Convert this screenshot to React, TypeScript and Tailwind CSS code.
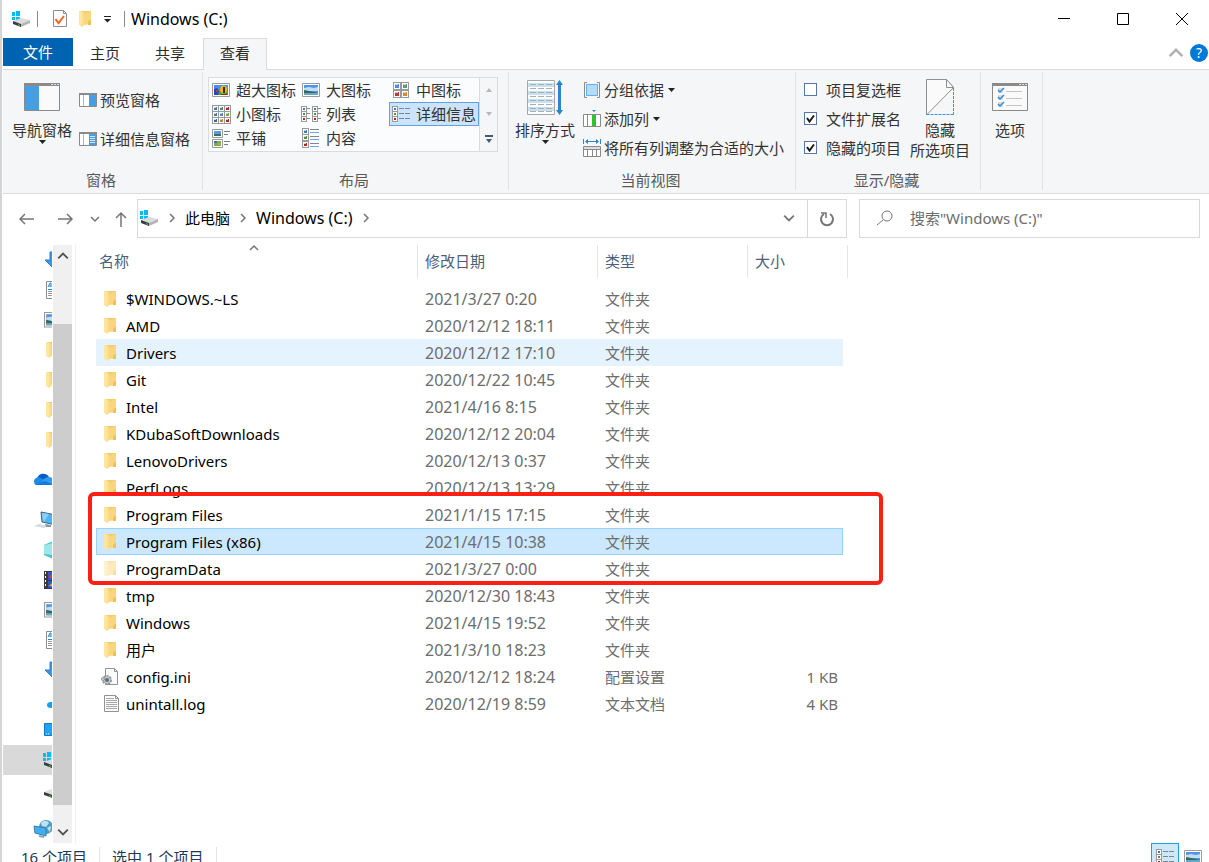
import { useState } from "react";
import type { ReactNode } from "react";
import clsx from "clsx";

type IconKind = "folder" | "hidden" | "config" | "text";

interface FileEntry {
  name: string;
  date: string;
  type: string;
  size?: string;
  icon: IconKind;
}

const FILES: FileEntry[] = [
  { name: "$WINDOWS.~LS", date: "2021/3/27 0:20", type: "文件夹", icon: "folder" },
  { name: "AMD", date: "2020/12/12 18:11", type: "文件夹", icon: "folder" },
  { name: "Drivers", date: "2020/12/12 17:10", type: "文件夹", icon: "folder" },
  { name: "Git", date: "2020/12/22 10:45", type: "文件夹", icon: "folder" },
  { name: "Intel", date: "2021/4/16 8:15", type: "文件夹", icon: "folder" },
  { name: "KDubaSoftDownloads", date: "2020/12/12 20:04", type: "文件夹", icon: "folder" },
  { name: "LenovoDrivers", date: "2020/12/13 0:37", type: "文件夹", icon: "folder" },
  { name: "PerfLogs", date: "2020/12/13 13:29", type: "文件夹", icon: "folder" },
  { name: "Program Files", date: "2021/1/15 17:15", type: "文件夹", icon: "folder" },
  { name: "Program Files (x86)", date: "2021/4/15 10:38", type: "文件夹", icon: "folder" },
  { name: "ProgramData", date: "2021/3/27 0:00", type: "文件夹", icon: "hidden" },
  { name: "tmp", date: "2020/12/30 18:43", type: "文件夹", icon: "folder" },
  { name: "Windows", date: "2021/4/15 19:52", type: "文件夹", icon: "folder" },
  { name: "用户", date: "2021/3/10 18:23", type: "文件夹", icon: "folder" },
  { name: "config.ini", date: "2020/12/12 18:24", type: "配置设置", size: "1 KB", icon: "config" },
  { name: "unintall.log", date: "2020/12/19 8:59", type: "文本文档", size: "4 KB", icon: "text" },
];

/* ---------- Icons ---------- */

function Svg({ w, h, className, children }: { w: number; h: number; className?: string; children: ReactNode }) {
  return (
    <svg width={w} height={h} viewBox={`0 0 ${w} ${h}`} fill="none" aria-hidden="true" className={clsx("shrink-0", className)}>
      {children}
    </svg>
  );
}

function FolderIcon({ faded = false }: { faded?: boolean }) {
  return (
    <Svg w={20} h={20} className={faded ? "opacity-50" : ""}>
      <path d="M6 2h10v13h-7z" fill="#f2cc6a" />
      <path d="M9 5l7-3v13l-7 1z" fill="#f7d67e" />
      <path d="M15 11h1v5h-3v-3z" fill="#efc052" />
      <path d="M4 2h2l3 2v12l-2 2-3-2z" fill="#ffe6a0" />
      <path d="M7 4l2-1v13l-2 2z" fill="#fbdd8b" />
    </Svg>
  );
}

function DriveIcon() {
  return (
    <Svg w={20} h={18}>
      <path d="M1 2h3v4H1zM5 1h4v5H5zM1 7h3v3H1zM5 7h4v3H5z" fill="#00bcf2" />
      <path d="M2 11l8-3 9 2-9 4z" fill="#dcdcdc" />
      <path d="M2 11l8 3v3l-8-3z" fill="#3c3c3c" />
      <path d="M10 14l9-4v3l-9 4z" fill="#b4b4b4" />
      <path d="M7 14l2 1v1l-2-1z" fill="#3fd34b" />
    </Svg>
  );
}

function PlainDriveIcon() {
  return (
    <Svg w={20} h={18}>
      <path d="M0 9l8-3 10 2-8 4z" fill="#dedede" />
      <path d="M0 9l9 3v3l-9-3z" fill="#3c3c3c" />
      <path d="M9 12l9-4v3l-9 4z" fill="#b4b4b4" />
      <path d="M5 12l2 1v1l-2-1z" fill="#3fd34b" />
    </Svg>
  );
}

function PageCheckIcon() {
  return (
    <Svg w={16} h={18}>
      <path d="M1.5.5h10l3 3v13h-13z" fill="#fdfdfd" stroke="#8c8c8c" />
      <path d="M11.5.5v3h3" stroke="#8c8c8c" />
      <path d="M3.500 9l3 4 5.500-7" stroke="#f26522" strokeWidth="2" />
    </Svg>
  );
}

function DownloadIcon() {
  return (
    <Svg w={20} h={20}>
      <path d="M6 2h6v8h5l-8 8-8-8h5z" fill="#3a96e8" stroke="#2a7fce" />
    </Svg>
  );
}

function DocIcon() {
  return (
    <Svg w={20} h={20}>
      <path d="M2.500 1.500h13v17h-13z" fill="#fff" stroke="#8c8c8c" />
      <path d="M4 7l2-4h1v4M5 6h2" stroke="#1a88d8" />
      <path d="M9 4.500h5M9 6.500h5M4 9.500h10" stroke="#1a88d8" />
      <path d="M4 11.500h10M4 13.500h10M4 15.500h10" stroke="#9c9c9c" />
    </Svg>
  );
}

function PictureIcon({ w = 20 }: { w?: number }) {
  return (
    <svg width={w} height={(w * 7) / 9} viewBox="0 0 18 14" fill="none" aria-hidden="true" className="shrink-0">
      <path d="M.5.5h17v13H.5z" fill="#fff" stroke="#9a9a9a" />
      <path d="M2 2h14v10H2z" fill="#4f95e8" />
      <path d="M2 5l5-1 5 1 4-1v4H2z" fill="#c2dcf5" />
      <path d="M2 7l5 1 9 2v1H2z" fill="#2f6b58" />
      <path d="M2 10h14v2H2z" fill="#6ba6c9" />
    </svg>
  );
}

function OneDriveIcon() {
  return (
    <Svg w={24} h={16}>
      <path d="M5 7C6 1 14 0 17 5l-6 5z" fill="#0a5fc4" />
      <path d="M4 13a4 4 0 0 1 0-7c3-1 5 0 7 1l8 6z" fill="#1b8be8" />
      <path d="M11 8c3-4 10-4 12 1v4H9z" fill="#2f9df4" />
      <path d="M3 13l10-4 9 4z" fill="#1478dc" />
    </Svg>
  );
}

function PcIcon() {
  return (
    <Svg w={24} h={20}>
      <path d="M9 2l15 3v10l-14-3z" fill="#4cb4f4" stroke="#4c6172" />
      <path d="M10 3l7 1-5 8-1-1z" fill="#8bd0fa" />
      <path d="M2 16l5-2 9 2-4 2z" fill="#d2dbe2" />
      <path d="M13 14l6 1v2h-5z" fill="#8a98a4" />
    </Svg>
  );
}

function CubeIcon() {
  return (
    <Svg w={20} h={20}>
      <path d="M0 5l9-4 9 4v10l-9 4-9-4z" fill="#45c4cc" />
      <path d="M0 5l9-2v12l-9-1z" fill="#9ee6e8" />
    </Svg>
  );
}

function VideoIcon() {
  return (
    <Svg w={20} h={20}>
      <path d="M0 1h20v18H0z" fill="#3a3a3a" />
      <path d="M1.500 2v16" stroke="#fff" strokeWidth="1" strokeDasharray="2 2" />
      <path d="M4 2h14v8H4z" fill="#3056c8" />
      <path d="M5 8l2-4 3 4z" fill="#e8352b" />
      <path d="M4 11h14v7H4z" fill="#3056c8" />
      <path d="M5 16l3-3 2 4z" fill="#f2a53a" />
    </Svg>
  );
}

function MusicIcon() {
  return (
    <Svg w={20} h={20}>
      <ellipse cx="7" cy="15" rx="4" ry="3" fill="#12a0f5" />
      <path d="M11 2v13" stroke="#12a0f5" strokeWidth="2" />
    </Svg>
  );
}

function DesktopIcon() {
  return (
    <Svg w={20} h={16}>
      <path d="M.5 1.500h18v12H.5z" fill="#1ea5fb" stroke="#0f78c4" />
      <path d="M2 12h1M4 12h1" stroke="#fff" />
    </Svg>
  );
}

function NetworkIcon() {
  return (
    <Svg w={22} h={20}>
      <circle cx="13" cy="8" r="7" fill="#4d9dc4" />
      <path d="M8 4c3-3 6-3 8 0l-3 4-4-1zM14 9l4-2-1 6z" fill="#bfe3f2" />
      <path d="M1 7l12 2v8L2 14z" fill="#42aef2" stroke="#3a7fae" />
      <path d="M6 17l5 1" stroke="#8fa5b3" strokeWidth="2" />
    </Svg>
  );
}

function ConfigFileIcon() {
  return (
    <Svg w={20} h={20}>
      <path d="M5.500 1.500h9l3 3v13h-12z" fill="#fafafa" stroke="#929292" />
      <path d="M14.500 1.500v3h3" stroke="#929292" />
      <circle cx="7" cy="13" r="4" fill="#c8ced3" stroke="#8f979d" strokeWidth="2" strokeDasharray="2 1" />
      <circle cx="7" cy="13" r="2" fill="#5f6b74" />
      <circle cx="3" cy="12" r="1.500" fill="#d0d5d9" stroke="#8f979d" />
    </Svg>
  );
}

function TextFileIcon() {
  return (
    <Svg w={20} h={20}>
      <path d="M4.500 1.500h11l3 3v13h-14z" fill="#fafafa" stroke="#929292" />
      <path d="M15.500 1.500v3h3" stroke="#929292" />
      <path d="M6 4.500h8M6 6.500h11M6 8.500h11M6 10.500h11M6 12.500h11M6 14.500h11" stroke="#a8a8a8" />
    </Svg>
  );
}

function FileIcon({ kind }: { kind: IconKind }) {
  if (kind === "config") return <ConfigFileIcon />;
  if (kind === "text") return <TextFileIcon />;
  return <FolderIcon faded={kind === "hidden"} />;
}

function Chevron({ dir, size = 10, className = "text-[#757575]" }: { dir: "up" | "down" | "right"; size?: number; className?: string }) {
  const d = { up: "M1 7l4-4 4 4", down: "M1 3l4 4 4-4", right: "M3 1l4 4-4 4" }[dir];
  return (
    <svg width={size} height={size} viewBox="0 0 10 10" fill="none" aria-hidden="true" className={clsx("shrink-0", className)}>
      <path d={d} stroke="currentColor" strokeWidth="1.500" />
    </svg>
  );
}

function Caret({ className }: { className?: string }) {
  return (
    <Svg w={7} h={4} className={className}>
      <path d="M0 0h7L3.500 4z" fill="#222" />
    </Svg>
  );
}

function NavPaneIcon() {
  return (
    <Svg w={36} h={28}>
      <path d="M.5.5h35v27H.5z" fill="#fafafa" stroke="#8a8a8a" />
      <path d="M0 0h36v3H0z" fill="#8a8a8a" />
      <path d="M27 1h2v1h-2zM30 1h2v1h-2zM33 1h2v1h-2z" fill="#e4e4e4" />
      <path d="M1 3h14v24H1z" fill="#479fe2" />
    </Svg>
  );
}

function SidePaneIcon({ lines = false }: { lines?: boolean }) {
  return (
    <Svg w={18} h={14}>
      <path d="M.5.5h17v13H.5z" fill="#fff" stroke="#8a8a8a" />
      <path d="M0 0h18v2H0z" fill="#8a8a8a" />
      <path d="M4.500 2v11" stroke="#b4b4b4" />
      <path d="M10 2h7v11h-7z" fill="#479fe2" />
      {lines && <path d="M11 4.500h5M11 6.500h5M11 8.500h5M11 10.500h5" stroke="#cfe8fb" />}
    </Svg>
  );
}

// small framed thumbnail used by most of the layout icons
function Thumb({ x, y, color, s = 6 }: { x: number; y: number; color: string; s?: number }) {
  return (
    <g>
      <rect x={x + 0.5} y={y + 0.5} width={s - 1} height={s - 1} fill="#fff" stroke="#9a9a9a" />
      <rect x={x + 2} y={y + 2} width={s - 4} height={s - 4} fill={color} />
      {s > 6 && <rect x={x + 2} y={y + 2} width={s - 5} height="1" fill="#b9d5ee" />}
    </g>
  );
}

function XLargeIcon() {
  return (
    <Svg w={18} h={14}>
      <path d="M.5.5h17v13H.5z" fill="#fff" stroke="#9a9a9a" />
      <path d="M2 2h14v6H2z" fill="#4a8df0" />
      <path d="M2 8h14v4H2z" fill="#4a9b43" />
      <path d="M2 6l3-1 2 3-1 4H2z" fill="#2948b8" />
      <path d="M4 7h2v2H4z" fill="#e33126" />
      <ellipse cx="11.500" cy="6.500" rx="3.500" ry="4" fill="#f3b51d" />
      <path d="M11 4h2v6h-2z" fill="#3a2a14" />
      <path d="M9 11h6v1H9z" fill="#8c2a1c" />
    </Svg>
  );
}

function MediumIcon() {
  return (
    <Svg w={18} h={16}>
      <Thumb x={1} y={0} s={8} color="#4f8fd6" />
      <Thumb x={9} y={0} s={8} color="#5a9f74" />
      <Thumb x={1} y={8} s={8} color="#c0392b" />
      <Thumb x={9} y={8} s={8} color="#d98b2b" />
    </Svg>
  );
}

function SmallIcon() {
  const colors = ["#3c7ac4", "#3f8f86", "#b3261e", "#3f7f9c", "#4c84d0", "#7aa637", "#2f6f9c", "#d07a24", "#b3261e"];
  return (
    <Svg w={19} h={19}>
      {colors.map((c, i) => (
        <Thumb key={i} x={(i % 3) * 6} y={Math.floor(i / 3) * 6} s={7} color={c} />
      ))}
    </Svg>
  );
}

function ListIcon() {
  return (
    <Svg w={20} h={17}>
      {[0, 11].map((x) => (
        <g key={x}>
          <Thumb x={x} y={0} color="#3c7ac4" />
          <Thumb x={x} y={5} color="#5b8f37" />
          <Thumb x={x} y={10} color="#b3261e" />
          <path d={`M${x + 6} 2.500h3M${x + 6} 7.500h3M${x + 6} 12.500h3`} stroke="#8a8a8a" />
        </g>
      ))}
    </Svg>
  );
}

function DetailsIcon() {
  return (
    <Svg w={18} h={16}>
      <Thumb x={0} y={0} color="#3c7ac4" />
      <Thumb x={0} y={5} color="#5b8f37" />
      <Thumb x={0} y={10} color="#b3261e" />
      <path d="M7 2.500h5M13 2.500h5M7 7.500h5M13 7.500h5M7 12.500h5M13 12.500h5" stroke="#7d8792" />
    </Svg>
  );
}

function TilesIcon() {
  return (
    <Svg w={18} h={19}>
      <path d="M.5.5h10v8H.5zM.5 10.500h10v8H.5z" fill="#fff" stroke="#9a9a9a" />
      <path d="M2 2h7v3H2z" fill="#5b9be0" />
      <path d="M2 5h7v2H2z" fill="#36706c" />
      <path d="M2 12h7v5H2z" fill="#79b04a" />
      <path d="M2 12h3v2H2z" fill="#3f6fc0" />
      <path d="M6 14h2v2H6z" fill="#e09a2c" />
      <path d="M12 2.500h6M12 5.500h4M12 12.500h6M12 15.500h4" stroke="#7d7d7d" />
    </Svg>
  );
}

function ContentIcon() {
  return (
    <Svg w={18} h={20}>
      <Thumb x={0} y={0} s={7} color="#3c7ac4" />
      <Thumb x={0} y={6} s={7} color="#5b8f37" />
      <Thumb x={0} y={13} s={7} color="#b3261e" />
      <path d="M8 1.500h9M8 8.500h9M8 15.500h9" stroke="#7d8792" />
      <path d="M8 4.500h9M8 11.500h9M8 18.500h9" stroke="#6ea3f2" />
    </Svg>
  );
}

function SortIcon() {
  return (
    <Svg w={36} h={35}>
      <path d="M.5.5h27v34H.5z" fill="#fff" stroke="#a6a6a6" />
      <path d="M1 3h26v4H1zM1 11h26v4H1zM1 19h26v4H1zM1 27h26v4H1z" fill="#c5e2f3" />
      {[4, 8, 12, 16, 20, 24, 28, 31].map((y) => (
        <path key={y} d={`M3 ${y + 0.5}h6M11 ${y + 0.5}h6M19 ${y + 0.5}h6`} stroke="#adadad" />
      ))}
      <path d="M32.500 0l3.500 5h-2v25h2l-3.500 5-3.500-5h2V5h-2z" fill="#2b84d0" />
    </Svg>
  );
}

function GroupIcon() {
  return (
    <Svg w={18} h={16}>
      <path d="M4 .5H1.500v15H4M14 .5h2.500v15H14" stroke="#8a8a8a" />
      <path d="M3.500 2.500h11v11h-11z" fill="#b3dcfb" stroke="#68aee6" />
    </Svg>
  );
}

function AddColumnIcon() {
  return (
    <Svg w={18} h={17}>
      <path d="M9 0h4l-2 2z" fill="#2b84d0" />
      <path d="M.5 4.500h17v12H.5z" fill="#fff" stroke="#8a8a8a" />
      <path d="M4.500 4v13" stroke="#8a8a8a" />
      <path d="M9 5h4v11H9z" fill="#2fc42f" />
    </Svg>
  );
}

function FitColumnsIcon() {
  return (
    <Svg w={18} h={18}>
      <path d="M.5 0v5M17.500 0v5M3 2.500h12" stroke="#2b84d0" />
      <path d="M2 2.500l3-2.500v5zM16 2.500l-3-2.500v5z" fill="#2b84d0" />
      <path d="M.5 7.500h17v10H.5z" fill="#fff" stroke="#8a8a8a" />
      <path d="M1 8h16v2H1z" fill="#dcdcdc" />
      <path d="M.5 10.500h17M4.500 11v6M9.500 11v6M13.500 11v6" stroke="#8a8a8a" />
    </Svg>
  );
}

function HideIcon() {
  return (
    <Svg w={29} h={37}>
      <path d="M.5 36V.5h20l7 8L.5 36" fill="#fafafa" stroke="#8f8f8f" />
      <path d="M20.500.5v8h7z" fill="#fff" stroke="#8f8f8f" />
      <path d="M27.500 9v27M27.500 35.500H1" stroke="#3a96e8" strokeDasharray="3 1" />
    </Svg>
  );
}

function OptionsIcon() {
  return (
    <Svg w={36} h={28}>
      <path d="M.5.5h35v27H.5z" fill="#fafafa" stroke="#8a8a8a" />
      <path d="M0 0h36v3H0z" fill="#8a8a8a" />
      <path d="M27 1h2v1h-2zM30 1h2v1h-2zM33 1h2v1h-2z" fill="#e4e4e4" />
      {[6, 13, 20].map((y) => (
        <g key={y}>
          <path d={`M6 ${y - 1}h5v5H6z`} fill="#dcdcdc" />
          <path d={`M6 ${y + 1}l2 2 4-4`} stroke="#2b8fe0" strokeWidth="1.500" />
          <path d={`M14 ${y + 2.5}h16`} stroke="#c4c4c4" />
        </g>
      ))}
    </Svg>
  );
}

/* ---------- Title bar and tabs ---------- */

function TitleBar() {
  return (
    <header className="flex h-[38px] items-center pl-2">
      <DriveIcon />
      <span className="ml-1.5 h-4 w-px bg-[#8a8a8a]" />
      <button aria-label="属性" className="ml-3.5">
        <PageCheckIcon />
      </button>
      <button aria-label="新建文件夹" className="ml-[7px]">
        <FolderIcon />
      </button>
      <button aria-label="自定义快速访问工具栏" className="ml-2">
        <Svg w={9} h={8}>
          <path d="M1 1.500h7" stroke="#222" />
          <path d="M1 4h7L4.500 7.500z" fill="#222" />
        </Svg>
      </button>
      <span className="ml-3 h-4 w-px bg-[#8a8a8a]" />
      <h1 className="ml-1.5 text-base leading-5 text-black">Windows (C:)</h1>
      <div className="ml-auto flex gap-[5px]">
        <button aria-label="最小化" className="flex h-[38px] w-[54px] items-center justify-center">
          <Svg w={12} h={12}>
            <path d="M0 5.500h12" stroke="#000" />
          </Svg>
        </button>
        <button aria-label="最大化" className="flex h-[38px] w-[54px] items-center justify-center">
          <Svg w={12} h={12}>
            <path d="M.5.5h11v11H.5z" stroke="#000" />
          </Svg>
        </button>
        <button aria-label="关闭" className="flex h-[38px] w-[54px] items-center justify-center">
          <Svg w={12} h={12}>
            <path d="M0 0l12 12M12 0L0 12" stroke="#000" />
          </Svg>
        </button>
      </div>
    </header>
  );
}

function Tabs() {
  return (
    <nav className="flex h-8 items-start border-b border-[#dadbdc] text-[#2b2b2b]">
      <button className="h-7 w-[70px] bg-[#0063b1] text-white">文件</button>
      <button className="h-[30px] w-16">主页</button>
      <button className="h-[30px] w-[66px]">共享</button>
      <button className="h-8 w-16 border-x border-t border-[#dadbdc] bg-[#f5f6f7] pb-[3px]">查看</button>
      <div className="ml-auto flex h-[30px] items-center gap-0.5">
        <button aria-label="最小化功能区" className="p-1">
          <Chevron dir="up" size={16} className="text-[#b0b0b0]" />
        </button>
        <button aria-label="帮助" className="mr-px flex size-[18px] items-center justify-center rounded-full bg-[#0078d7] text-sm text-white">
          ?
        </button>
      </div>
    </nav>
  );
}

/* ---------- Ribbon ---------- */

function Group({ label, className, children }: { label: string; className: string; children: ReactNode }) {
  return (
    <section className={clsx("flex h-[118px] shrink-0 flex-col border-r border-[#e1e2e3]", className)}>
      <div className="flex flex-1">{children}</div>
      <p className="h-5 pr-[3px] text-center leading-5 text-[#5a5a5a]">{label}</p>
    </section>
  );
}

function SmallButton({ icon, label, caret = false }: { icon: ReactNode; label: string; caret?: boolean }) {
  return (
    <button className="flex h-[29px] items-center gap-[3px] whitespace-nowrap">
      {icon}
      {label}
      {caret && <Caret className="ml-px" />}
    </button>
  );
}

function BigButton({ icon, label, caret = false, className }: { icon: ReactNode; label: string; caret?: boolean; className: string }) {
  return (
    <button className={clsx("flex flex-col items-center leading-5 whitespace-pre-line", className)}>
      <span className="flex h-10 items-center">{icon}</span>
      <span className="mt-[3px]">{label}</span>
      {caret && <Caret />}
    </button>
  );
}

const LAYOUTS = [
  { label: "超大图标", icon: <XLargeIcon /> },
  { label: "大图标", icon: <PictureIcon w={18} /> },
  { label: "中图标", icon: <MediumIcon /> },
  { label: "小图标", icon: <SmallIcon /> },
  { label: "列表", icon: <ListIcon /> },
  { label: "详细信息", icon: <DetailsIcon /> },
  { label: "平铺", icon: <TilesIcon /> },
  { label: "内容", icon: <ContentIcon /> },
];

function LayoutGallery() {
  const [active, setActive] = useState("详细信息");
  return (
    <div className="mt-[5px] ml-[5px] flex h-[75px]">
      <div className="grid w-[272px] grid-cols-[90px_90px_90px] grid-rows-[24px_24px_24px] border border-[#dadbdc] bg-[#fbfcfd]">
        {LAYOUTS.map((l) => (
          <button
            key={l.label}
            onClick={() => setActive(l.label)}
            className={clsx(
              "flex items-center gap-1.5 border pl-0.5 whitespace-nowrap",
              active === l.label ? "border-[#62a2e4] bg-[#cce4fb]" : "border-transparent"
            )}
          >
            <span className="flex w-[18px] justify-center">{l.icon}</span>
            {l.label}
          </button>
        ))}
      </div>
      <div className="flex w-[18px] flex-col border-y border-r border-[#dadbdc]">
        <button aria-label="上一行" className="flex flex-1 items-center justify-center">
          <Svg w={6} h={4}>
            <path d="M0 4h6L3 0z" fill="#b4b8bd" />
          </Svg>
        </button>
        <button aria-label="下一行" className="flex flex-1 items-center justify-center">
          <Svg w={6} h={4}>
            <path d="M0 0h6L3 4z" fill="#b4b8bd" />
          </Svg>
        </button>
        <button aria-label="更多" className="flex flex-1 items-center justify-center">
          <Svg w={8} h={8}>
            <path d="M0 0h8v2H0zM1 4h6L4 8z" fill="#44597a" />
          </Svg>
        </button>
      </div>
    </div>
  );
}

function CheckRow({ label, initial }: { label: string; initial: boolean }) {
  const [checked, setChecked] = useState(initial);
  return (
    <label className="flex h-[29px] items-center gap-[9px] whitespace-nowrap">
      <span className="relative flex size-[13px]">
        <input
          type="checkbox"
          checked={checked}
          onChange={(e) => setChecked(e.target.checked)}
          className="size-[13px] appearance-none border border-[#5a76a8] bg-white"
        />
        {checked && (
          <Svg w={13} h={13} className="pointer-events-none absolute inset-0">
            <path d="M3 6l2.500 3.500L10 3.500" stroke="#1a1a1a" strokeWidth="2" />
          </Svg>
        )}
      </span>
      {label}
    </label>
  );
}

function Ribbon() {
  return (
    <div className="flex h-[124px] border-b border-[#dadbdc] bg-[#f5f6f7] pt-0.5 text-[#333]">
      <Group label="窗格" className="w-[200px]">
        <BigButton icon={<NavPaneIcon />} label="导航窗格" caret className="ml-2 w-[62px] pt-[5px]" />
        <div className="ml-1.5 flex flex-col gap-2.5 pt-[13px]">
          <SmallButton icon={<SidePaneIcon />} label="预览窗格" />
          <SmallButton icon={<SidePaneIcon lines />} label="详细信息窗格" />
        </div>
      </Group>
      <Group label="布局" className="w-[306px]">
        <LayoutGallery />
      </Group>
      <Group label="当前视图" className="w-[287px]">
        <BigButton icon={<SortIcon />} label="排序方式" caret className="ml-[5px] w-[62px] pt-[5px]" />
        <div className="ml-[7px] flex flex-col items-start pt-[3px]">
          <SmallButton icon={<GroupIcon />} label="分组依据" caret />
          <SmallButton icon={<AddColumnIcon />} label="添加列" caret />
          <SmallButton icon={<FitColumnsIcon />} label="将所有列调整为合适的大小" />
        </div>
      </Group>
      <Group label="显示/隐藏" className="w-[185px]">
        <div className="ml-2 flex flex-col pt-[3px]">
          <CheckRow label="项目复选框" initial={false} />
          <CheckRow label="文件扩展名" initial />
          <CheckRow label="隐藏的项目" initial />
        </div>
        <BigButton icon={<HideIcon />} label={"隐藏\n所选项目"} className="ml-2 w-[62px] pt-[5px]" />
      </Group>
      <section className="h-[118px] w-[62px] shrink-0 border-r border-[#e1e2e3]">
        <BigButton icon={<OptionsIcon />} label="选项" className="ml-1 w-[50px] pt-[5px]" />
      </section>
    </div>
  );
}

/* ---------- Address bar ---------- */

function AddressRow() {
  return (
    <div className="flex h-[51px] items-start pt-[5px] pr-[9px]">
      <div className="flex h-[39px] w-[134px] items-center pl-4 text-[#757575]">
        <button aria-label="后退">
          <Svg w={16} h={14}>
            <path d="M6 2L1 7l5 5M1 7h14" stroke="currentColor" strokeWidth="1.500" />
          </Svg>
        </button>
        <button aria-label="前进" className="ml-[23px]">
          <Svg w={16} h={14}>
            <path d="M9 2l5 5-5 5M14 7H0" stroke="currentColor" strokeWidth="1.500" />
          </Svg>
        </button>
        <button aria-label="最近浏览的位置" className="ml-4">
          <Chevron dir="down" />
        </button>
        <button aria-label="上移" className="ml-3.5">
          <Svg w={14} h={16}>
            <path d="M2 7l5-5 5 5M7 2v14" stroke="currentColor" strokeWidth="1.500" />
          </Svg>
        </button>
      </div>
      <div className="flex h-[39px] flex-1 items-center border border-[#d9d9d9] pb-px pl-px text-black">
        <DriveIcon />
        <Chevron dir="right" className="ml-2 text-[#757575]" />
        <button className="ml-2">此电脑</button>
        <Chevron dir="right" className="ml-2 text-[#757575]" />
        <button className="ml-2 text-base leading-5">Windows (C:)</button>
        <Chevron dir="right" className="ml-2 text-[#757575]" />
        <button aria-label="以前的位置" className="mr-3 ml-auto">
          <Chevron dir="down" size={12} />
        </button>
        <button aria-label="刷新" className="-mb-px flex h-[37px] w-[39px] items-center justify-center border-l border-[#d9d9d9] text-[#757575]">
          <Svg w={16} h={16}>
            <path d="M11 3a6 6 0 1 1-6 0" stroke="currentColor" strokeWidth="2" />
            <path d="M2 2h5v5" stroke="currentColor" strokeWidth="1.500" />
          </Svg>
        </button>
      </div>
      <label className="ml-3 flex h-[39px] w-[341px] items-center gap-4 border border-[#d9d9d9] pb-px pl-4 text-[#757575]">
        <Svg w={18} h={18}>
          <circle cx="11" cy="7" r="5" stroke="currentColor" />
          <path d="M7 11l-6 5" stroke="currentColor" />
        </Svg>
        <input
          type="text"
          aria-label="搜索"
          placeholder={'搜索"Windows (C:)"'}
          className="min-w-0 flex-1 outline-none placeholder:text-[#6d6d6d]"
        />
      </label>
    </div>
  );
}

/* ---------- Navigation pane ---------- */

interface TreeItem {
  id: string;
  icon: ReactNode;
  className?: string;
}

const TREE: TreeItem[] = [
  { id: "下载", icon: <DownloadIcon />, className: "pl-[41px]" },
  { id: "文档", icon: <DocIcon />, className: "pl-[41px]" },
  { id: "图片", icon: <PictureIcon />, className: "pl-[41px]" },
  { id: "文件夹 1", icon: <FolderIcon />, className: "pl-[39px]" },
  { id: "文件夹 2", icon: <FolderIcon />, className: "pl-[39px]" },
  { id: "文件夹 3", icon: <FolderIcon />, className: "pl-[39px]" },
  { id: "文件夹 4", icon: <FolderIcon />, className: "pl-[39px]" },
  { id: "OneDrive", icon: <OneDriveIcon />, className: "mt-2.5 pl-[29px]" },
  { id: "此电脑", icon: <PcIcon />, className: "mt-2.5 pl-[29px]" },
  { id: "3D 对象", icon: <CubeIcon />, className: "pl-[41px]" },
  { id: "视频", icon: <VideoIcon />, className: "pl-[41px]" },
  { id: "此电脑图片", icon: <PictureIcon />, className: "pl-[41px]" },
  { id: "此电脑文档", icon: <DocIcon />, className: "pl-[41px]" },
  { id: "此电脑下载", icon: <DownloadIcon />, className: "pl-[41px]" },
  { id: "音乐", icon: <MusicIcon />, className: "pl-[41px]" },
  { id: "桌面", icon: <DesktopIcon />, className: "pl-[41px]" },
  { id: "Windows (C:)", icon: <DriveIcon />, className: "bg-[#d9d9d9] pl-[39px]" },
  { id: "本地磁盘 (D:)", icon: <PlainDriveIcon />, className: "pl-[41px] pt-1" },
];

function NavPane() {
  return (
    <aside className="flex shrink-0 border-r border-[#f0f0f0] pr-[3px]">
      <div className="w-[49px] overflow-hidden">
        {TREE.map((t) => (
          <button key={t.id} aria-label={t.id} className={clsx("flex h-[30px] w-full items-center", t.className)}>
            {t.icon}
          </button>
        ))}
        <button aria-label="网络" className="mt-2.5 flex h-7 w-full items-center pl-[30px]">
          <NetworkIcon />
        </button>
      </div>
      <div className="ml-px flex w-[19px] flex-col bg-[#f0f0f0]">
        <button aria-label="向上滚动" className="flex h-[79px] justify-center pt-[5px]">
          <Chevron dir="up" size={12} className="text-[#505050]" />
        </button>
        <div className="flex-1 bg-[#cdcdcd]" />
        <button aria-label="向下滚动" className="flex h-[38px] items-end justify-center pb-[5px]">
          <Chevron dir="down" size={12} className="text-[#505050]" />
        </button>
      </div>
    </aside>
  );
}

/* ---------- File list ---------- */

const HEADERS = ["名称", "修改日期", "类型", "大小"];

function FileList() {
  const [selected, setSelected] = useState("Program Files (x86)");
  const focused = "Drivers";

  return (
    <div className="relative ml-5">
      <table className="w-[752px] table-fixed border-collapse text-left">
        <colgroup>
          <col className="w-[322px]" />
          <col className="w-[180px]" />
          <col className="w-[150px]" />
          <col className="w-[100px]" />
        </colgroup>
        <thead>
          <tr>
            {HEADERS.map((h, i) => (
              <th key={h} scope="col" className="p-0 pb-[7px] font-normal text-[#4c607a]">
                <button
                  className={clsx(
                    "relative flex h-[33px] w-full items-center border-r border-[#e5e5e5] pb-0.5",
                    i === 0 ? "pl-[3px]" : "pl-[7px]"
                  )}
                >
                  {h}
                  {i === 0 && <Chevron dir="up" className="absolute -top-0.5 left-1/2 -translate-x-2 text-[#757575]" />}
                </button>
              </th>
            ))}
          </tr>
        </thead>
        <tbody>
          {FILES.map((f) => {
            const isSelected = f.name === selected;
            const cell = clsx(
              "flex h-[27px] items-center",
              isSelected ? "border-y border-[#99d1ff] bg-[#cce8ff]" : f.name === focused && "bg-[#e5f3ff]"
            );
            return (
              <tr key={f.name} onClick={() => setSelected(f.name)} className="text-[#6d6d6d]">
                <td className="p-0">
                  <div className={clsx(cell, "gap-1.5 text-black", isSelected ? "border-l pl-[3px]" : "pl-1")}>
                    <FileIcon kind={f.icon} />
                    {f.name}
                  </div>
                </td>
                <td className="p-0">
                  <div className={clsx(cell, "pl-[7px] text-base")}>{f.date}</div>
                </td>
                <td className="p-0">
                  <div className={clsx(cell, "pl-[7px]")}>{f.type}</div>
                </td>
                <td className="p-0 pr-[5px]">
                  <div className={clsx(cell, "justify-end pr-[5px]", isSelected && "border-r")}>{f.size}</div>
                </td>
              </tr>
            );
          })}
        </tbody>
      </table>
      {/* annotation around the three program folders */}
      <div className="pointer-events-none absolute top-[247px] -left-2 h-[93px] w-[795px] rounded-md border-4 border-[#fb1f14]" />
    </div>
  );
}

function StatusBar() {
  return (
    <footer className="flex h-7 shrink-0 items-center pl-[18px] text-[#1e395b]">
      <span className="w-[79px] border-r border-[#e5e5e5]">16 个项目</span>
      <span className="w-[117px] border-r border-[#e5e5e5] pl-3">选中 1 个项目</span>
      <div className="ml-auto flex h-full items-center gap-[5px] pr-[7px]">
        <button aria-label="详细信息视图" className="flex h-full w-7 items-center justify-center border border-[#26a0da] bg-[#cde8f7]">
          <DetailsIcon />
        </button>
        <button aria-label="大缩略图视图">
          <PictureIcon w={18} />
        </button>
      </div>
    </footer>
  );
}

export default function App() {
  return (
    <div className="flex h-screen flex-col overflow-hidden border-l-2 border-[#d5d5d5] bg-white pl-px font-['Noto_Sans','Noto_Sans_CJK_SC',sans-serif] text-[15px] leading-5 select-none">
      <div className="shrink-0">
        <TitleBar />
        <Tabs />
        <Ribbon />
        <AddressRow />
      </div>
      <main className="flex shrink-0">
        <NavPane />
        <FileList />
      </main>
      <StatusBar />
    </div>
  );
}
